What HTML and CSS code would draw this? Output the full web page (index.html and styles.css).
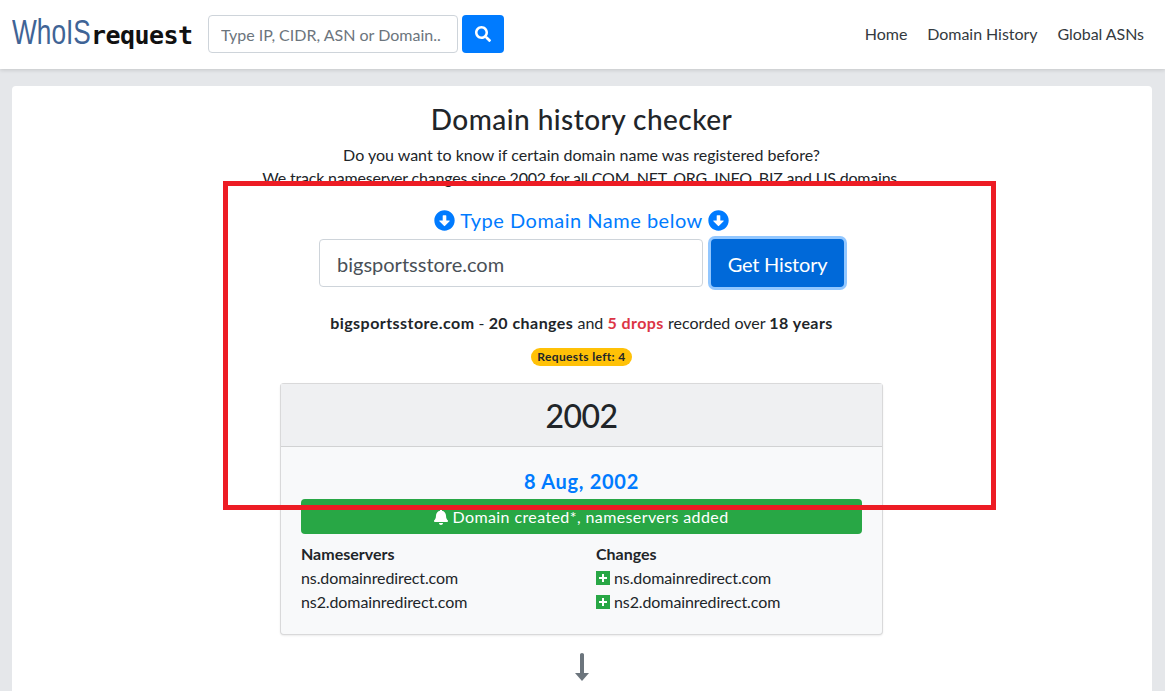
FILE: index.html
```html
<!DOCTYPE html>
<html lang="en">
<head>
<meta charset="utf-8">
<title>Domain history checker</title>
<link rel="stylesheet" href="styles.css">
</head>
<body>
<nav class="navbar">
  <a class="logo"><span class="logo-a">WhoIS</span><span class="logo-b">request</span></a>
  <form class="search">
    <input class="search-input" placeholder="Type IP, CIDR, ASN or Domain..">
    <button type="button" class="search-btn" aria-label="Search">
      <svg viewBox="0 0 512 512" width="16" height="16"><path fill="#fff" d="M505 442.700L405.300 343c-4.500-4.500-10.600-7-17-7H372c27.600-35.300 44-79.700 44-128C416 93.100 322.900 0 208 0S0 93.100 0 208s93.100 208 208 208c48.300 0 92.700-16.400 128-44v16.300c0 6.400 2.500 12.500 7 17l99.700 99.700c9.400 9.400 24.600 9.400 33.900 0l28.300-28.300c9.400-9.400 9.400-24.600.1-34zM208 336c-70.700 0-128-57.200-128-128 0-70.700 57.200-128 128-128 70.700 0 128 57.200 128 128 0 70.700-57.200 128-128 128z"/></svg>
    </button>
  </form>
  <ul class="nav-links">
    <li>Home</li>
    <li>Domain History</li>
    <li>Global ASNs</li>
  </ul>
</nav>
<main class="panel">
  <h1 class="title">Domain history checker</h1>
  <p class="intro">Do you want to know if certain domain name was registered before?<br><span class="intro-second">We track nameserver changes since 2002 for all COM, NET, ORG, INFO, BIZ and US domains.</span></p>
  <h2 class="prompt">
    <svg class="circle-down" viewBox="0 0 512 512"><path fill="#007bff" d="M504 256c0 137-111 248-248 248S8 393 8 256 119 8 256 8s248 111 248 248zM212 140v116h-70.900c-10.700 0-16.100 13-8.500 20.500l114.900 114.300c4.700 4.700 12.200 4.700 16.900 0l114.900-114.300c7.600-7.600 2.200-20.500-8.500-20.500H300V140c0-6.600-5.400-12-12-12h-64c-6.600 0-12 5.400-12 12z"/></svg>
    Type Domain Name below
    <svg class="circle-down" viewBox="0 0 512 512"><path fill="#007bff" d="M504 256c0 137-111 248-248 248S8 393 8 256 119 8 256 8s248 111 248 248zM212 140v116h-70.900c-10.700 0-16.100 13-8.500 20.500l114.900 114.300c4.700 4.700 12.200 4.700 16.900 0l114.900-114.300c7.600-7.600 2.200-20.500-8.500-20.500H300V140c0-6.600-5.400-12-12-12h-64c-6.600 0-12 5.400-12 12z"/></svg>
  </h2>
  <form class="lookup">
    <input class="lookup-input" value="bigsportsstore.com">
    <button type="button" class="lookup-btn">Get History</button>
  </form>
  <p class="summary"><b>bigsportsstore.com</b> - <b>20 changes</b> and <b class="red">5 drops</b> recorded over <b>18 years</b></p>
  <div class="badge-row"><span class="badge">Requests left: 4</span></div>
  <section class="card">
    <header class="card-head">2002</header>
    <div class="card-body">
      <div class="date">8 Aug, 2002</div>
      <div class="alert">
        <svg class="bell" viewBox="0 0 448 512"><path fill="#fff" d="M224 512c35.300 0 64-28.700 64-64H160c0 35.300 28.700 64 64 64zm215.400-149.700c-19.300-20.800-55.500-52-55.500-154.300 0-77.700-54.500-139.900-127.900-155.200V32c0-17.700-14.300-32-32-32s-32 14.300-32 32v20.800C118.600 68.100 64.100 130.300 64.100 208c0 102.300-36.200 133.500-55.500 154.300-6 6.400-8.700 14.100-8.600 21.700.1 16.400 13 32 32.100 32h383.800c19.100 0 32-15.600 32.100-32 .1-7.600-2.600-15.300-8.600-21.700z"/></svg>
        Domain created*, nameservers added
      </div>
      <div class="cols">
        <div class="col">
          <h3 class="col-title">Nameservers</h3>
          <div class="row">ns.domainredirect.com</div>
          <div class="row">ns2.domainredirect.com</div>
        </div>
        <div class="col">
          <h3 class="col-title">Changes</h3>
          <div class="row"><span class="plus"></span>ns.domainredirect.com</div>
          <div class="row"><span class="plus"></span>ns2.domainredirect.com</div>
        </div>
      </div>
    </div>
  </section>
  <div class="arrow">
    <svg viewBox="0 0 14 28" width="14" height="28"><path fill="#6c757d" d="M5 1.500a2 1.500 0 0 1 4 0V20h5l-7 8-7-8h5z"/></svg>
  </div>
</main>
<div class="highlight"></div>
</body>
</html>
```
FILE: styles.css
```css
* { box-sizing: border-box; }
html, body { height: 100%; }
body {
  margin: 0;
  height: 691px;
  overflow: hidden;
  background: #e5e7ea;
  color: #212529;
  font: 16px/24px Lato, "Open Sans", sans-serif;
  position: relative;
}
.navbar {
  height: 69px;
  background: #fff;
  box-shadow: 0 1px 4px rgba(0,0,0,.15);
  display: flex;
  align-items: center;
  padding: 0 21px 1px 12px;
}
.logo { flex: none; width: 196px; white-space: nowrap; display: flex; align-items: baseline; }
.logo-a {
  display: inline-block;
  width: 79px;
  font: 35px/40px "Liberation Sans", sans-serif;
  color: #3f6496;
  transform: scaleX(.75);
  transform-origin: left;
}
.logo-b {
  font: bold 25px/40px "DejaVu Sans Mono", monospace;
  color: #111;
  letter-spacing: -.55px;
}
.search { display: flex; gap: 4px; }
.search-input {
  width: 250px; height: 38px;
  border: 1px solid #ced4da; border-radius: 4px;
  padding: 0 12px;
  font: inherit; color: #495057;
}
.search-input::placeholder { color: #6c757d; opacity: 1; }
.search-btn {
  width: 42px; height: 38px; border: 0; border-radius: 4px;
  background: #007bff;
  display: flex; align-items: center; justify-content: center;
}
.nav-links { list-style: none; margin: 0 0 0 auto; padding: 0; display: flex; gap: 20px; letter-spacing: -.05px; }
.nav-links li { color: #343a40; }
.panel {
  margin: 17px 13px 0 12px;
  background: #fff;
  border-radius: 4px;
  padding: 15px 1px 40px 0;
  display: flex; flex-direction: column; align-items: center;
}
.title { margin: 0 0 6px; font-size: 28px; line-height: 36px; font-weight: 500; letter-spacing: .45px; }
.intro { margin: 0; text-align: center; line-height: 23px; }
.intro-second { letter-spacing: -.2px; }
.prompt {
  margin: 19px 0 0; font-size: 20px; line-height: 24px; font-weight: 400; color: #007bff;
  letter-spacing: .5px;
  display: flex; align-items: center; gap: 5px;
}
.circle-down { width: 21px; height: 21px; }
.lookup { display: flex; gap: 8px; margin-top: 7px; }
.lookup-input {
  width: 384px; height: 48px;
  border: 1px solid #ced4da; border-radius: 4px;
  padding: 2px 16px 0 17px;
  font: 20px Lato, "Open Sans", sans-serif; color: #495057;
}
.lookup-btn {
  width: 133px; height: 48px;
  border: 0; border-radius: 4px;
  padding: 2px 0 0;
  background: #0069d9; color: #fff;
  box-shadow: 0 0 0 3px rgba(38,143,255,.5);
  font: 20px Lato, "Open Sans", sans-serif;
  letter-spacing: -.2px;
}
.summary { margin: 24px 0 0; }
.summary b { letter-spacing: .45px; }
.red { color: #dc3545; }
.badge-row { margin-top: 13px; height: 18px; display: flex; }
.badge {
  background: #ffc107; color: #212529;
  border-radius: 10px; padding: 0 6px;
  font-size: 12px; line-height: 18px; font-weight: 700;
  letter-spacing: .35px;
}
.card {
  width: 603px; margin-top: 17px;
  background: #f8f9fa;
  border: 1px solid rgba(0,0,0,.125);
  border-radius: 4px;
  box-shadow: 0 1px 2px rgba(0,0,0,.08);
  height: 252px;
}
.card-head {
  height: 63px;
  background: #eff0f2;
  border-bottom: 1px solid rgba(0,0,0,.125);
  text-align: center;
  font-size: 32px; line-height: 64px; font-weight: 500;
  letter-spacing: -.6px;
}
.card-body { padding: 22px 20px 0; }
.date { text-align: center; font-size: 20px; line-height: 24px; font-weight: 700; color: #007bff; letter-spacing: .7px; }
.alert {
  margin-top: 6px; height: 35px;
  background: #28a745; color: #fff; border-radius: 4px;
  letter-spacing: .4px;
  display: flex; align-items: center; justify-content: center; gap: 4px;
}
.bell { width: 14px; height: 16px; }
.cols { display: flex; margin-top: 8px; }
.col { flex: none; width: 295px; }
.col + .col { width: auto; }
.col-title { margin: 0; font-size: 16px; line-height: 24px; font-weight: 700; }
.row { line-height: 24px; display: flex; align-items: center; letter-spacing: -.1px; }
.plus {
  width: 14px; height: 14px; margin-right: 4px;
  background:
    linear-gradient(#fff,#fff) center/8px 2px no-repeat,
    linear-gradient(#fff,#fff) center/2px 8px no-repeat,
    #28a745;
}
.arrow { margin-top: 18px; height: 28px; display: flex; }
.highlight {
  position: absolute;
  left: 223px; top: 181px;
  width: 773px; height: 329px;
  border: 5px solid #ed1c24;
}
```
